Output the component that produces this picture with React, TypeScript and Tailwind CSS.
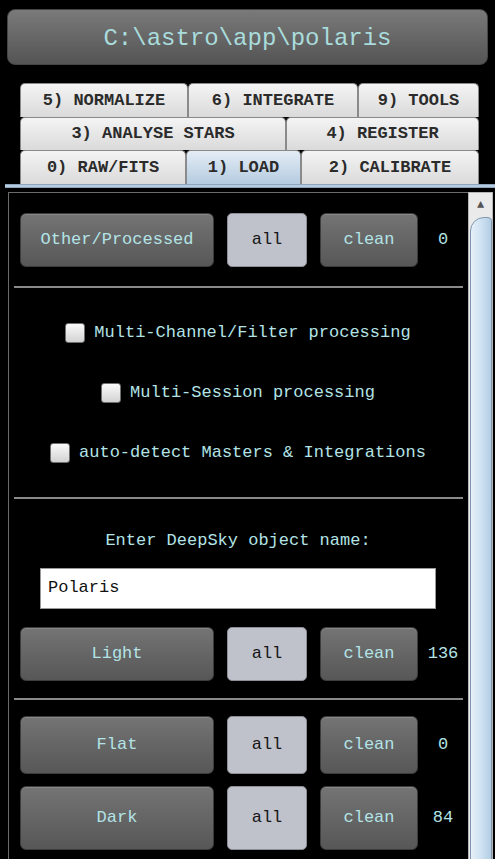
import React from "react";

const mono = "[font-family:'Liberation_Mono','Courier_New',monospace]";

function Tab({ label, w, active }: { label: string; w: string; active?: boolean }) {
  return (
    <div
      className={`${w} h-full flex items-center justify-center rounded-t-[5px] border border-b-0 border-[#8a8a8a] text-[17px] font-bold text-[#2b2b2b] ${
        active
          ? "bg-gradient-to-b from-[#e4edf6] to-[#b5cbe0]"
          : "bg-gradient-to-b from-[#f4f4f4] to-[#dadada]"
      }`}
    >
      {label}
    </div>
  );
}

function Row({ label, count, h = "h-[54px]" }: { label: string; count: number; h?: string }) {
  return (
    <div className={`flex items-center ${h}`}>
      <button className="w-[194px] h-full rounded-[6px] border border-[#3c3c3c] bg-gradient-to-b from-[#747474] to-[#575757] text-[17px] text-[#b3e3e6] shadow-[inset_0_1px_0_rgba(255,255,255,0.15)]">
        {label}
      </button>
      <button className="ml-[13px] w-[80px] h-full rounded-[5px] border border-[#8e8f96] bg-[#bfc1cb] text-[17px] text-[#151515]">
        all
      </button>
      <button className="ml-[13px] w-[98px] h-full rounded-[6px] border border-[#3c3c3c] bg-gradient-to-b from-[#747474] to-[#575757] text-[17px] text-[#b3e3e6] shadow-[inset_0_1px_0_rgba(255,255,255,0.15)]">
        clean
      </button>
      <span className="ml-[5px] w-[40px] text-center text-[17px] text-[#b3e3e6]">{count}</span>
    </div>
  );
}

function Check({ label }: { label: string }) {
  return (
    <div className="flex items-center justify-center gap-[9px] h-[20px]">
      <span className="w-[20px] h-[20px] rounded-[3px] border border-[#6f6f6f] bg-gradient-to-b from-[#fbfbfb] to-[#d2d2d2]" />
      <span className="text-[17px] text-[#b3e3e6]">{label}</span>
    </div>
  );
}

export default function App() {
  return (
    <div className={`w-[495px] h-[859px] overflow-hidden bg-black ${mono}`}>
      <div className="mx-[7px] pt-[9px]">
        <div className="h-[56px] pt-[4px] rounded-[8px] border border-[#444] bg-gradient-to-b from-[#7a7a7a] to-[#545454] flex items-center justify-center text-[24px] text-[#a9dcdc]">
          C:\astro\app\polaris
        </div>
      </div>

      <div className="mt-[18px] ml-[20px] w-[459px] flex flex-col">
        <div className="flex h-[34px]">
          <Tab label="5) NORMALIZE" w="w-[168px]" />
          <Tab label="6) INTEGRATE" w="w-[170px]" />
          <Tab label="9) TOOLS" w="w-[121px]" />
        </div>
        <div className="flex h-[33px]">
          <Tab label="3) ANALYSE STARS" w="w-[266px]" />
          <Tab label="4) REGISTER" w="w-[193px]" />
        </div>
        <div className="flex h-[34px]">
          <Tab label="0) RAW/FITS" w="w-[166px]" />
          <Tab label="1) LOAD" w="w-[115px]" active />
          <Tab label="2) CALIBRATE" w="w-[178px]" />
        </div>
      </div>
      <div className="ml-[5px] h-[4px] bg-[#b6cbe0] border-y border-[#8ea6bd]" />

      <div className="mt-[4px] ml-[8px] mr-[2px] flex">
        <div className="flex-1 border-l border-t border-[#6b6b6b] pt-[20px] pl-[11px]">
          <Row label="Other/Processed" count={0} />
          <div className="mt-[19px] ml-[-6px] w-[449px] h-[2px] bg-[#8a8a8a]" />

          <div className="pr-[12px] flex flex-col">
            <div className="mt-[35px]">
              <Check label="Multi-Channel/Filter processing" />
            </div>
            <div className="mt-[40px]">
              <Check label="Multi-Session processing" />
            </div>
            <div className="mt-[40px]">
              <Check label="auto-detect Masters & Integrations" />
            </div>
          </div>
          <div className="mt-[34px] ml-[-6px] w-[449px] h-[2px] bg-[#8a8a8a]" />

          <div className="pr-[12px] mt-[29px] text-center text-[17px] text-[#b3e3e6]">
            Enter DeepSky object name:
          </div>
          <div className="mt-[14px] ml-[20px] w-[396px] h-[41px] bg-white border border-[#9a9a9a] flex items-center pl-[7px] text-[17px] text-[#111]">
            Polaris
          </div>
          <div className="mt-[18px]">
            <Row label="Light" count={136} />
          </div>
          <div className="mt-[17px] ml-[-6px] w-[449px] h-[2px] bg-[#8a8a8a]" />
          <div className="mt-[16px]">
            <Row label="Flat" count={0} h="h-[58px]" />
          </div>
          <div className="mt-[12px]">
            <Row label="Dark" count={84} h="h-[64px]" />
          </div>
        </div>

        <div className="w-[25px] h-[680px] bg-[#eaeaea] border border-[#b5b5b5] flex flex-col">
          <div className="h-[24px] flex items-center justify-center text-[12px] text-[#555]">▲</div>
          <div className="flex-1 ml-[1px] rounded-tl-[14px] rounded-tr-[4px] border border-[#7f97ae] bg-gradient-to-r from-[#e6f0f8] via-[#cfe2f2] to-[#b3cde4]" />
        </div>
      </div>
    </div>
  );
}
